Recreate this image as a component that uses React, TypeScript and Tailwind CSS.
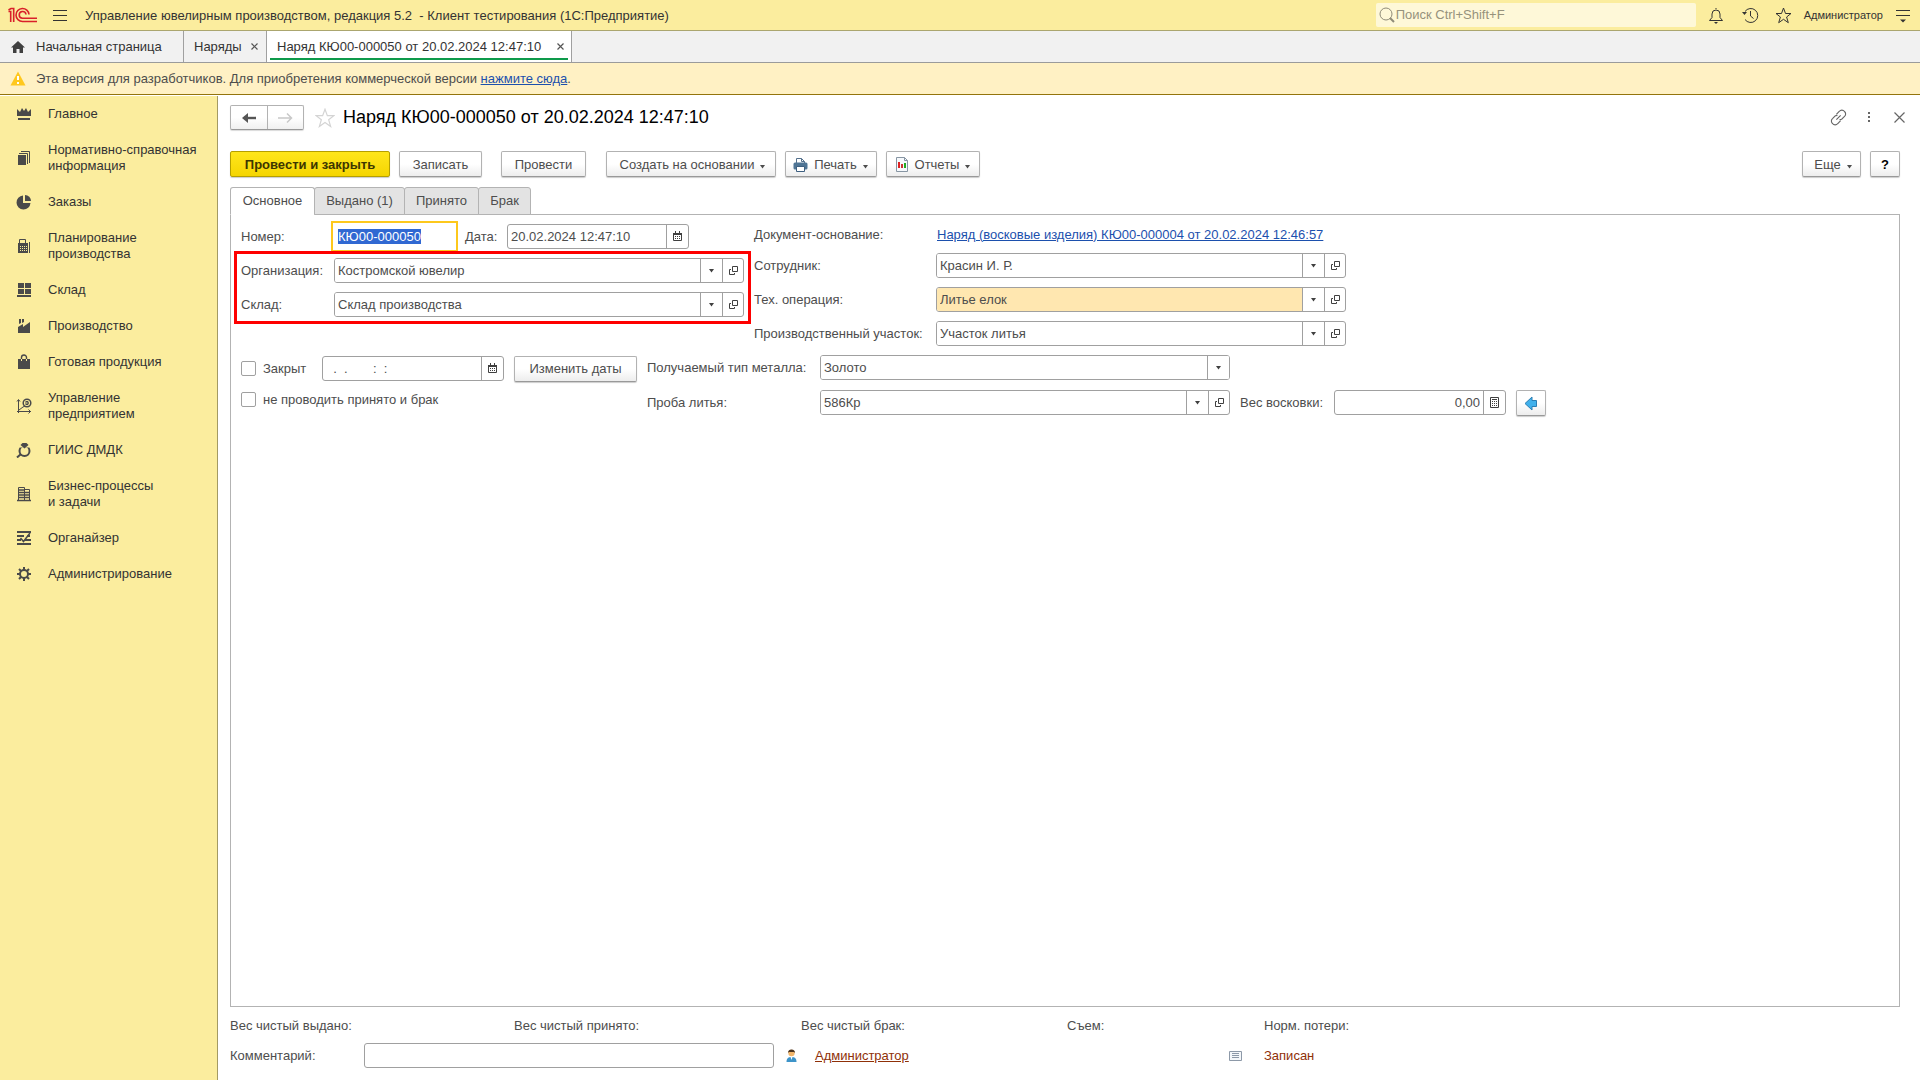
import React from 'react';
import { clsx } from 'clsx';

function Svg({ w, h, className, children }: { w: number; h: number; className?: string; children: React.ReactNode }) {
  return (
    <svg width={w} height={h} viewBox={`0 0 ${w} ${h}`} className={clsx('shrink-0', className)} fill="none" aria-hidden="true">
      {children}
    </svg>
  );
}

const starPath = 'M8.5 1l2 5.500h5.500l-4.400 3.500 1.700 5.700-4.800-3.400-4.800 3.400 1.700-5.700L1 6.500h5.500z';

const sections: { title: string; icon: React.ReactNode }[] = [
  {
    title: 'Главное',
    icon: (
      <>
        <path d="M1 3l3 3 2-4 2 3 2-3 2 4 3-3v7H1z" fill="currentColor" />
        <path d="M2 12h12v2H2z" fill="currentColor" />
      </>
    ),
  },
  {
    title: 'Нормативно-справочная информация',
    icon: (
      <>
        <path d="M2 5h8v10H2z" fill="currentColor" />
        <path d="M3 3.500h8.500V14M5 1.500h8.500V13" stroke="currentColor" />
      </>
    ),
  },
  {
    title: 'Заказы',
    icon: (
      <>
        <path d="M7 1.500V9h7.500A7 7 0 1 1 7 1.500z" fill="currentColor" />
        <path d="M9 1a6 6 0 0 1 6 6H9z" fill="currentColor" />
      </>
    ),
  },
  {
    title: 'Планирование производства',
    icon: (
      <>
        <path d="M3.500 6V1.500h6V6M13.500 4v11" stroke="currentColor" />
        <path d="M2 5h10v10H2z" fill="currentColor" />
        <path d="M4 8.500h7M4 10.500h7M4 12.500h7" stroke="#fbed9e" strokeDasharray="1 1" />
      </>
    ),
  },
  {
    title: 'Склад',
    icon: <path d="M2 1h6v5H2zM9 1h6v5H9zM2 7h6v5H2zM9 7h6v5H9zM1 13h14v2H1z" fill="currentColor" />,
  },
  {
    title: 'Производство',
    icon: (
      <>
        <path d="M2 9l5-3v3l7-5v11H2z" fill="currentColor" />
        <path d="M3 1h2v4L3 6zM6 1h2v3L6 5z" fill="currentColor" />
      </>
    ),
  },
  {
    title: 'Готовая продукция',
    icon: (
      <>
        <path d="M2 5h12v10H2z" fill="currentColor" />
        <path d="M5.500 5V3.500a2.500 2.500 0 0 1 5 0V5" stroke="currentColor" strokeWidth="1.400" />
        <path d="M5.500 5v2M10.500 5v2" stroke="#fbed9e" />
      </>
    ),
  },
  {
    title: 'Управление предприятием',
    icon: (
      <>
        <path d="M2.500 15V2M1 13.500h14M1 3.500l1.500-2 1.500 2M12.500 11.500l2 2-2 2M3 12l4-3 2-1" stroke="currentColor" />
        <circle cx="11" cy="5" r="3.800" stroke="currentColor" strokeWidth="1.500" />
        <path d="M9.500 3.500H12v3H9.500M9 5h4" stroke="currentColor" />
      </>
    ),
  },
  {
    title: 'ГИИС ДМДК',
    icon: (
      <>
        <circle cx="8.500" cy="9" r="5" stroke="currentColor" strokeWidth="2" />
        <path d="M5 12L1 15.500" stroke="currentColor" strokeWidth="2" />
        <path d="M4 .5h9v5H4z" fill="#fbed9e" />
        <path d="M6.500 1h4l2 2-4 3.500-4-3.500z" fill="currentColor" />
      </>
    ),
  },
  {
    title: 'Бизнес-процессы\nи задачи',
    icon: (
      <>
        <path d="M2.500 1.500h6v13h-6zM8.500 3.500h5v11h-5z" stroke="currentColor" />
        <path d="M3 4h5M3 6.500h10M3 9h10M3 11.500h10M1 14.500h14" stroke="currentColor" strokeWidth="1.300" />
      </>
    ),
  },
  {
    title: 'Органайзер',
    icon: (
      <>
        <path d="M1 2h14M1 6h7M11 6h3M1 10h4M9 10h6M1 14h14" stroke="currentColor" strokeWidth="2" />
        <path d="M4.500 8l3 3.500L14 3" stroke="currentColor" strokeWidth="1.500" />
      </>
    ),
  },
  {
    title: 'Администрирование',
    icon: (
      <>
        <circle cx="8" cy="8" r="4" stroke="currentColor" strokeWidth="2" />
        <path d="M8 1v3M8 12v3M1 8h3M12 8h3M3 3l2 2M11 11l2 2M13 3l-2 2M5 11l-2 2" stroke="currentColor" strokeWidth="2" />
      </>
    ),
  },
];

const formTabs = [
  { title: 'Основное', className: 'w-[85px] border-b-white bg-white' },
  { title: 'Выдано (1)', className: '-ml-px w-[91px] bg-[#e3e3e3]' },
  { title: 'Принято', className: '-ml-px w-[75px] bg-[#e3e3e3]' },
  { title: 'Брак', className: '-ml-px w-[53px] bg-[#e3e3e3]' },
];

const fieldBox = 'flex h-[25px] rounded-[3px] border border-[#a0a0a0] bg-white overflow-hidden';
const cell = 'flex shrink-0 items-center justify-center border-l border-[#a0a0a0] text-[#404040]';

function CaretIcon({ className }: { className?: string }) {
  return (
    <Svg w={7} h={4} className={className}>
      <path d="M1 0h5L3.500 3.500z" fill="currentColor" />
    </Svg>
  );
}

function OpenIcon() {
  return (
    <Svg w={11} h={11}>
      <path d="M4.500 1.500h5v5h-5zM3 4.500H1.500v5h5V8" stroke="currentColor" />
    </Svg>
  );
}

function CalendarIcon() {
  return (
    <Svg w={11} h={11}>
      <path d="M1.500 2.500h8v7h-8z" stroke="currentColor" />
      <path d="M1 2h9v2H1zM3 0h1v2H3zM7 0h1v2H7z" fill="currentColor" />
      <path d="M3 5.500h5M3 7.500h5" stroke="currentColor" strokeDasharray="1 1" />
    </Svg>
  );
}

function SelectField({
  id,
  value,
  openable = true,
  highlighted = false,
}: {
  id: string;
  value: string;
  openable?: boolean;
  highlighted?: boolean;
}) {
  return (
    <div className={clsx(fieldBox, 'w-[410px]')}>
      <div className="relative flex-1">
        <select
          id={id}
          className={clsx('h-full w-full appearance-none pl-[3px] pr-6 outline-none', highlighted ? 'bg-[#ffe7b0]' : 'bg-white')}
        >
          <option>{value}</option>
        </select>
        <span className={clsx(cell, 'pointer-events-none absolute inset-y-0 right-0 w-[22px] bg-white')}>
          <CaretIcon />
        </span>
      </div>
      {openable && (
        <button type="button" aria-label="Открыть" className={clsx(cell, 'w-[21px]')}>
          <OpenIcon />
        </button>
      )}
    </div>
  );
}

function DateField({ id, value, label }: { id: string; value: string; label?: string }) {
  return (
    <div className={clsx(fieldBox, 'w-[182px]')}>
      <input
        id={id}
        type="text"
        aria-label={label}
        defaultValue={value}
        className="min-w-0 flex-1 whitespace-pre pl-[3px] outline-none"
      />
      <button type="button" aria-label="Выбрать дату" className={clsx(cell, 'w-[22px]')}>
        <CalendarIcon />
      </button>
    </div>
  );
}

function ToolButton({ children, className, label }: { children: React.ReactNode; className?: string; label?: string }) {
  return (
    <button
      type="button"
      aria-label={label}
      className={clsx(
        'flex h-[26px] items-center justify-center rounded-[2px] border border-[#b2b2b2] border-b-[#999] bg-linear-to-b from-white from-50% to-[#ededed] pt-px shadow-[0_1px_1px_rgba(0,0,0,0.2)]',
        className
      )}
    >
      {children}
    </button>
  );
}

function TopBar() {
  return (
    <header className="flex h-[31px] items-center border-b border-[#aba66f] bg-[#fbed9e]">
      <Svg w={30} h={17} className="ml-2">
        <g stroke="#d9202a" strokeWidth="1.600">
          <path d="M.5 4.500h2.200V15M.5 3L3 1.500h2.700V15" />
          <path d="M21 7.500A6.500 6.500 0 1 0 14.500 14.500H29" />
          <path d="M18 7.500A3.400 3.400 0 1 0 14.500 11.300H29" />
        </g>
      </Svg>
      <button type="button" aria-label="Меню" className="ml-[14px]">
        <Svg w={16} h={12}>
          <path d="M1 1.500h14M1 6.500h14M1 11.500h14" stroke="#333" />
        </Svg>
      </button>
      <h1 className="ml-[17px] whitespace-pre pt-px">Управление ювелирным производством, редакция 5.2  - Клиент тестирования (1С:Предприятие)</h1>
      <div className="ml-auto flex h-6 w-80 items-center rounded-[2px] bg-[#fef8d8] pl-[3px]">
        <Svg w={16} h={16}>
          <circle cx="7" cy="7" r="6" stroke="#8f8b78" />
          <path d="M11 11l4 4" stroke="#8f8b78" strokeWidth="2" />
        </Svg>
        <input
          type="search"
          aria-label="Поиск"
          placeholder="Поиск Ctrl+Shift+F"
          className="ml-px min-w-0 flex-1 pb-px outline-none placeholder:text-[#96927c]"
        />
      </div>
      <button type="button" aria-label="Уведомления" className="ml-3">
        <Svg w={16} h={17}>
          <path d="M8 1v1M1.500 13.500h13L12 10.500V7a4 4 0 0 0-8 0v3.500z" stroke="#333" />
          <path d="M6 15h4l-2 2z" fill="#333" />
        </Svg>
      </button>
      <button type="button" aria-label="История" className="ml-[18px]">
        <Svg w={17} h={17}>
          <path d="M3 4.500a7 7 0 1 1 0 8M8.500 4v5l3 2.500" stroke="#333" />
          <path d="M0 5h5L2.500 8z" fill="#333" />
        </Svg>
      </button>
      <button type="button" aria-label="Избранное" className="ml-4">
        <Svg w={17} h={17}>
          <path d={starPath} stroke="#333" />
        </Svg>
      </button>
      <button type="button" className="ml-3 text-[11px]">
        Администратор
      </button>
      <button type="button" aria-label="Настройки" className="mr-[9px] ml-3">
        <Svg w={16} h={15}>
          <path d="M1 2.500h14M1 7.500h14" stroke="#333" />
          <path d="M5 11.500h6l-3 3z" fill="#333" />
        </Svg>
      </button>
    </header>
  );
}

function CloseMark() {
  return (
    <Svg w={9} h={9}>
      <path d="M1.500 1.500l6 6M7.500 1.500l-6 6" stroke="#555" strokeWidth="1.200" />
    </Svg>
  );
}

function WindowTabs() {
  return (
    <nav className="flex h-8 border-b border-[#9b9b9b] bg-[#f1f1f1]">
      <button type="button" className="flex w-[184px] items-center border-r border-[#a0a0a0] pl-[10px]">
        <Svg w={16} h={14} className="mr-[10px]">
          <path d="M8 1L1 7.500h2V13h3.500V9h3v4H13V7.500h2z" fill="#404040" />
        </Svg>
        Начальная страница
      </button>
      <div className="flex w-[83px] items-center justify-between border-r border-[#a0a0a0] pr-[7px] pl-[10px]">
        <button type="button">Наряды</button>
        <button type="button" aria-label="Закрыть">
          <CloseMark />
        </button>
      </div>
      <div className="w-[305px] border-r border-[#a0a0a0] bg-white px-[3px] pb-[2px]">
        <div className="flex h-full items-center justify-between border-b-2 border-[#0e9a4b] pt-1 pr-[3px] pl-[7px]">
          <button type="button">Наряд КЮ00-000050 от 20.02.2024 12:47:10</button>
          <button type="button" aria-label="Закрыть">
            <CloseMark />
          </button>
        </div>
      </div>
    </nav>
  );
}

function Notice() {
  return (
    <div className="flex h-8 items-center border-b border-[#93740c] bg-[#fff1c4] pl-[10px] text-[#4d4d4d]">
      <Svg w={16} h={15} className="mr-[10px]">
        <path d="M8 0.500L15.500 14.500H0.500z" fill="#ffc81e" />
        <path d="M7 5h2v4H7zM7 11h2v2H7z" fill="#fff" />
      </Svg>
      <p>
        Эта версия для разработчиков. Для приобретения коммерческой версии{' '}
        <a href="#" className="text-[#1c50ad] underline">
          нажмите сюда
        </a>
        .
      </p>
    </div>
  );
}

function Sidebar() {
  return (
    <aside className="mt-px w-[218px] shrink-0 border-r border-[#a39a63] bg-[#fbed9e]">
      <ul>
        {sections.map((s) => (
          <li key={s.title}>
            <a href="#" className="flex items-center py-[10px] pr-3 pl-4 leading-4 text-[#333]">
              <Svg w={16} h={16} className="mr-4 text-[#4a4a4a]">
                {s.icon}
              </Svg>
              <span className="max-w-40 whitespace-pre-line">{s.title}</span>
            </a>
          </li>
        ))}
      </ul>
    </aside>
  );
}

function DocumentHeader() {
  return (
    <div className="flex h-[25px] items-center">
      <div className="flex h-full w-[74px] rounded-[2px] border border-[#b2b2b2] border-b-[#999] bg-linear-to-b from-white from-50% to-[#f0f0f0] shadow-[0_1px_1px_rgba(0,0,0,0.15)]">
        <button type="button" aria-label="Назад" className="flex flex-1 items-center justify-center border-r border-[#b2b2b2]">
          <Svg w={16} h={12}>
            <path d="M3 6h12" stroke="#555" strokeWidth="2.400" />
            <path d="M7 1v10L1 6z" fill="#555" />
          </Svg>
        </button>
        <button type="button" aria-label="Вперед" className="flex flex-1 items-center justify-center">
          <Svg w={16} h={12}>
            <path d="M1 6h13M10 1.500L14.500 6 10 10.500" stroke="#c8c8c8" strokeWidth="1.500" />
          </Svg>
        </button>
      </div>
      <button type="button" aria-label="В избранное" className="ml-[11px]">
        <svg width="20" height="20" viewBox="0 0 17 17" fill="none">
          <path d={starPath} stroke="#d4d4d4" />
        </svg>
      </button>
      <h2 className="ml-2 pb-[2px] text-lg leading-6 text-black">Наряд КЮ00-000050 от 20.02.2024 12:47:10</h2>
      <div className="ml-auto flex items-center text-[#666]">
        <button type="button" aria-label="Ссылка" className="mr-5">
          <svg width="17" height="17" viewBox="0 0 24 24" fill="none" stroke="currentColor" strokeWidth="1.600">
            <path d="M9 7.500l4-4a4.700 4.700 0 0 1 7.500 0 4.700 4.700 0 0 1 0 7l-4 4-3 .5" />
            <path d="M15 16.500l-4 4a4.700 4.700 0 0 1-7.500 0 4.700 4.700 0 0 1 0-7l4-4 3-.5M9 15l6-6" />
          </svg>
        </button>
        <button type="button" aria-label="Действия" className="mr-[23px]">
          <Svg w={4} h={13}>
            <path d="M1 1h2v2H1zM1 5h2v2H1zM1 9h2v2H1z" fill="currentColor" />
          </Svg>
        </button>
        <button type="button" aria-label="Закрыть документ" className="-mr-[5px]">
          <Svg w={11} h={11}>
            <path d="M.5.5l10 10M10.500.5l-10 10" stroke="currentColor" strokeWidth="1.200" />
          </Svg>
        </button>
      </div>
    </div>
  );
}

function Toolbar() {
  return (
    <div className="mt-[21px] flex">
      <button
        type="button"
        className="h-[26px] w-40 rounded-[2px] border border-[#b59f00] bg-linear-to-b from-[#ffe61a] to-[#f5d500] pt-px font-bold text-[#3d3600] shadow-[0_1px_1px_rgba(0,0,0,0.2)]"
      >
        Провести и закрыть
      </button>
      <ToolButton className="ml-[9px] w-[83px]">Записать</ToolButton>
      <ToolButton className="ml-[19px] w-[85px]">Провести</ToolButton>
      <ToolButton className="ml-5 w-[170px] gap-[5px] pl-1">
        Создать на основании <CaretIcon className="mt-1" />
      </ToolButton>
      <ToolButton className="ml-[9px] w-[92px] gap-[6px]">
        <Svg w={15} h={15}>
          <path d="M3.500 6V1.500h5l3 3V6M8.500 1.500v3h3" fill="#fff" stroke="#54708c" />
          <rect x="0.500" y="5.500" width="14" height="7" rx="1.500" fill="#4f7595" />
          <path d="M3.500 9.500h8v5h-8z" fill="#fff" stroke="#3d5f80" />
        </Svg>
        <span className="flex items-center gap-[5px]">
          Печать <CaretIcon className="mt-1" />
        </span>
      </ToolButton>
      <ToolButton className="ml-[9px] w-[94px] gap-[6px]">
        <Svg w={14} h={15}>
          <path d="M1.500.5h8l3 3v11h-11z" fill="#f6f9fc" stroke="#8795a3" />
          <path d="M9.500.5v3h3" stroke="#8795a3" />
          <path d="M3 5h2v6H3z" fill="#d22" />
          <path d="M6 7h2v4H6z" fill="#c33" />
          <path d="M9 6h2v5H9z" fill="#2a2" />
        </Svg>
        <span className="flex items-center gap-[5px]">
          Отчеты <CaretIcon className="mt-1" />
        </span>
      </ToolButton>
      <ToolButton className="ml-auto w-[59px] gap-[5px] pl-1">
        Еще <CaretIcon className="mt-1" />
      </ToolButton>
      <ToolButton label="Справка" className="ml-[9px] w-[30px] font-bold text-black">
        ?
      </ToolButton>
    </div>
  );
}

function FormTabs() {
  return (
    <div role="tablist" className="relative -mb-px mt-[10px] flex h-7">
      {formTabs.map((tab, i) => (
        <button
          key={tab.title}
          type="button"
          role="tab"
          aria-selected={i === 0}
          className={clsx('rounded-t-[3px] border border-[#b3b3b3] pb-px', tab.className)}
        >
          {tab.title}
        </button>
      ))}
    </div>
  );
}

function MainPanel() {
  return (
    <div className="flex-1 border border-[#b3b3b3] pt-[9px] pl-[3px]">
      <div className="flex">
        <div className="flex w-[520px] shrink-0 flex-col">
          <div className="flex items-center pl-[7px]">
            <label htmlFor="number" className="w-[93px]">
              Номер:
            </label>
            <input
              id="number"
              type="text"
              defaultValue="КЮ00-000050"
              autoFocus
              onFocus={(e) => e.currentTarget.select()}
              className="h-[25px] w-[121px] pl-1 outline-2 outline-offset-1 outline-[#fdc81c] selection:bg-[#3068d2] selection:text-white"
            />
            <label htmlFor="date" className="ml-[10px] w-[42px]">
              Дата:
            </label>
            <DateField id="date" value="20.02.2024 12:47:10" />
          </div>
          <div className="relative mt-[2px] flex w-[517px] flex-col gap-[9px] border-3 border-[#fe0000] p-1">
            <div className="flex items-center">
              <label htmlFor="organization" className="w-[93px]">
                Организация:
              </label>
              <SelectField id="organization" value="Костромской ювелир" />
            </div>
            <div className="flex items-center">
              <label htmlFor="warehouse" className="w-[93px]">
                Склад:
              </label>
              <SelectField id="warehouse" value="Склад производства" />
            </div>
          </div>
        </div>
        <div className="flex flex-col gap-[9px]">
          <div className="flex h-5 items-center pt-px">
            <span className="w-[183px]">Документ-основание:</span>
            <a href="#" className="text-[#1c50ad] underline">
              Наряд (восковые изделия) КЮ00-000004 от 20.02.2024 12:46:57
            </a>
          </div>
          <div className="flex items-center">
            <label htmlFor="employee" className="w-[182px]">
              Сотрудник:
            </label>
            <SelectField id="employee" value="Красин И. Р." />
          </div>
          <div className="flex items-center">
            <label htmlFor="operation" className="w-[182px]">
              Тех. операция:
            </label>
            <SelectField id="operation" value="Литье елок" highlighted />
          </div>
          <div className="flex items-center">
            <label htmlFor="area" className="w-[182px]">
              Производственный участок:
            </label>
            <SelectField id="area" value="Участок литья" />
          </div>
        </div>
      </div>

      <div className="mt-[9px] flex pl-[7px]">
        <div className="flex w-[406px] shrink-0 flex-col gap-[10px]">
          <div className="flex h-[27px] items-center">
            <label className="flex w-[81px] items-center gap-[7px]">
              <input type="checkbox" className="size-[15px] appearance-none rounded-[2px] border border-[#a0a0a0] bg-white" />
              Закрыт
            </label>
            <DateField id="closed-date" label="Дата закрытия" value="  .  .       :  :" />
            <ToolButton className="ml-[10px] w-[123px]">Изменить даты</ToolButton>
          </div>
          <label className="flex h-[15px] items-center gap-[7px]">
            <input type="checkbox" className="size-[15px] appearance-none rounded-[2px] border border-[#a0a0a0] bg-white" />
            не проводить принято и брак
          </label>
        </div>
        <div className="flex flex-col gap-[9px]">
          <div className="flex h-[25px] items-center">
            <label htmlFor="metal" className="w-[173px]">
              Получаемый тип металла:
            </label>
            <SelectField id="metal" value="Золото" openable={false} />
          </div>
          <div className="flex h-[27px] items-center">
            <label htmlFor="fineness" className="w-[173px]">
              Проба литья:
            </label>
            <SelectField id="fineness" value="586Кр" />
            <label htmlFor="wax" className="ml-[10px] w-[94px]">
              Вес восковки:
            </label>
            <div className={clsx(fieldBox, 'w-[172px]')}>
              <input id="wax" type="text" defaultValue="0,00" className="min-w-0 flex-1 pr-[3px] text-right outline-none" />
              <button type="button" aria-label="Калькулятор" className={clsx(cell, 'w-[22px]')}>
                <Svg w={9} h={11}>
                  <path d="M.5.5h8v10h-8zM2 2.500h5" stroke="currentColor" />
                  <path d="M2 4.500h5M2 6.500h5M2 8.500h5" stroke="currentColor" strokeDasharray="1 1" />
                </Svg>
              </button>
            </div>
            <ToolButton label="Заполнить вес" className="ml-[10px] w-[30px]">
              <Svg w={14} h={15}>
                <path d="M1 7.500L8 1v3.500h4.500v6H8V14z" fill="#41b1ec" stroke="#2b7fb4" />
              </Svg>
            </ToolButton>
          </div>
        </div>
      </div>
    </div>
  );
}

function FormFooter() {
  return (
    <footer className="mt-2 flex flex-col gap-2 pb-3">
      <div className="flex h-5 items-center pt-px">
        <span className="w-[284px]">Вес чистый выдано:</span>
        <span className="w-[287px]">Вес чистый принято:</span>
        <span className="w-[266px]">Вес чистый брак:</span>
        <span className="w-[197px]">Съем:</span>
        <span>Норм. потери:</span>
      </div>
      <div className="flex h-[25px] items-center">
        <label htmlFor="comment" className="w-[134px]">
          Комментарий:
        </label>
        <input id="comment" type="text" className="h-full w-[410px] rounded-[3px] border border-[#a0a0a0] px-1 outline-none" />
        <Svg w={11} h={14} className="mx-3">
          <circle cx="5.500" cy="4" r="3.200" fill="#f2b66b" />
          <path d="M2 4a3.500 3.500 0 0 1 7 0L8 3H3z" fill="#4a3420" />
          <path d="M.5 13c0-4 2-5 5-5s5 1 5 5z" fill="#3d94c9" />
          <path d="M4.500 8h2l-1 3z" fill="#fff" />
        </Svg>
        <a href="#" className="ml-[6px] w-[414px] text-[#8f3008] underline">
          Администратор
        </a>
        <Svg w={13} h={10}>
          <path d="M.5.5h12v9H.5z" fill="#f4f7fa" stroke="#8d99a8" />
          <path d="M3 2.500h7M3 4.500h7M3 6.500h7" stroke="#8d99a8" />
        </Svg>
        <span className="ml-[22px] text-[#8f3008]">Записан</span>
      </div>
    </footer>
  );
}

export default function App() {
  return (
    <div className="flex min-h-screen flex-col bg-white font-['Liberation_Sans',Arial,sans-serif] text-[13px] leading-4 text-[#333]">
      <TopBar />
      <WindowTabs />
      <Notice />
      <div className="flex flex-1">
        <Sidebar />
        <main className="flex min-w-0 flex-1 flex-col pt-[10px] pr-5 pl-3 text-[#4d4d4d]">
          <DocumentHeader />
          <Toolbar />
          <FormTabs />
          <MainPanel />
          <FormFooter />
        </main>
      </div>
    </div>
  );
}
